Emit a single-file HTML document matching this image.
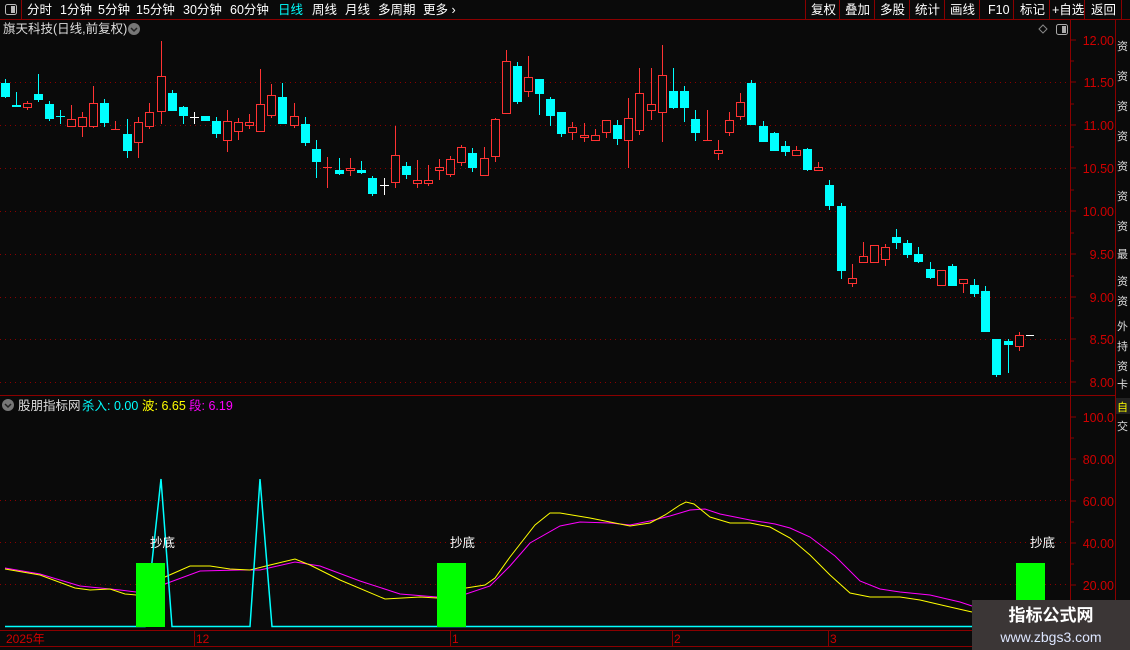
<!DOCTYPE html>
<html><head><meta charset="utf-8"><style>
body{margin:0;background:#0a0a0a;width:1130px;height:650px;overflow:hidden;font-family:"Liberation Sans","Noto Sans CJK SC",sans-serif;}
svg{position:absolute;left:0;top:0}
</style></head><body>
<svg width="1130" height="650" viewBox="0 0 1130 650" font-family="Liberation Sans, Noto Sans CJK SC, sans-serif">
<rect width="1130" height="650" fill="#0a0a0a"/>
<!-- top bar -->
<line x1="0" y1="19.5" x2="1130" y2="19.5" stroke="#8b0000"/>
<line x1="21.5" y1="0" x2="21.5" y2="19" stroke="#8b0000"/>
<rect x="5.5" y="4.5" width="11" height="10" rx="2" fill="none" stroke="#bbb"/><rect x="11" y="6" width="4" height="7" fill="#bbb"/>
<g font-size="12.5" fill="#fff">
<text x="27" y="14">分时</text><text x="60" y="14">1分钟</text><text x="98" y="14">5分钟</text><text x="136" y="14">15分钟</text><text x="183" y="14">30分钟</text><text x="230" y="14">60分钟</text>
<text x="278" y="14" fill="#00ffff">日线</text><text x="312" y="14">周线</text><text x="345" y="14">月线</text><text x="378" y="14">多周期</text><text x="423" y="14">更多 ›</text>
<text x="811" y="14">复权</text><text x="845" y="14">叠加</text><text x="880" y="14">多股</text><text x="915" y="14">统计</text><text x="950" y="14">画线</text><text x="988" y="14">F10</text><text x="1020" y="14">标记</text><text x="1052" y="14">+自选</text><text x="1091" y="14">返回</text>
</g>
<g stroke="#8b0000"><line x1="805.5" y1="0" x2="805.5" y2="19"/><line x1="839.5" y1="0" x2="839.5" y2="19"/><line x1="874.5" y1="0" x2="874.5" y2="19"/><line x1="909.5" y1="0" x2="909.5" y2="19"/><line x1="944.5" y1="0" x2="944.5" y2="19"/><line x1="979.5" y1="0" x2="979.5" y2="19"/><line x1="1013.5" y1="0" x2="1013.5" y2="19"/><line x1="1049.5" y1="0" x2="1049.5" y2="19"/><line x1="1084.5" y1="0" x2="1084.5" y2="19"/><line x1="1121.5" y1="0" x2="1121.5" y2="19"/></g>
<text x="3" y="33" font-size="12.5" fill="#ddd">旗天科技(日线,前复权)</text>
<circle cx="134" cy="29" r="6" fill="#777"/><path d="M131 28l3 3 3-3" stroke="#222" stroke-width="1.5" fill="none"/>
<path d="M1043 25l4 4-4 4-4-4z" fill="none" stroke="#888"/>
<rect x="1056.5" y="24.5" width="11" height="10" rx="2" fill="none" stroke="#aaa"/><rect x="1062" y="26" width="4" height="7" fill="#aaa"/>
<!-- axes -->
<line x1="1070.5" y1="19" x2="1070.5" y2="650" stroke="#8b0000"/>
<line x1="1115.5" y1="19" x2="1115.5" y2="650" stroke="#8b0000"/>
<line x1="0" y1="395.5" x2="1115" y2="395.5" stroke="#8b0000"/>
<g stroke="#8b0000" stroke-dasharray="1 4">
<line x1="0" y1="82.5" x2="1068" y2="82.5"/><line x1="0" y1="125.5" x2="1068" y2="125.5"/><line x1="0" y1="168.5" x2="1068" y2="168.5"/><line x1="0" y1="211.5" x2="1068" y2="211.5"/><line x1="0" y1="254.5" x2="1068" y2="254.5"/><line x1="0" y1="297.5" x2="1068" y2="297.5"/><line x1="0" y1="339.5" x2="1068" y2="339.5"/><line x1="0" y1="382.5" x2="1068" y2="382.5"/>
<line x1="0" y1="500.5" x2="1068" y2="500.5"/><line x1="0" y1="542.5" x2="1068" y2="542.5"/><line x1="0" y1="584.5" x2="1068" y2="584.5"/>
</g>
<g fill="#d00000" font-size="12.5" text-anchor="end">
<text x="1114" y="45">12.00</text><text x="1114" y="87">11.50</text><text x="1114" y="130">11.00</text><text x="1114" y="173">10.50</text><text x="1114" y="216">10.00</text><text x="1114" y="259">9.50</text><text x="1114" y="302">9.00</text><text x="1114" y="344">8.50</text><text x="1114" y="387">8.00</text>
<text x="1114" y="422">100.0</text><text x="1114" y="464">80.00</text><text x="1114" y="506">60.00</text><text x="1114" y="548">40.00</text><text x="1114" y="590">20.00</text>
</g>
<g stroke="#8b0000"><path d="M1071 40h5M1071 61h3M1071 82h5M1071 104h3M1071 125h5M1071 147h3M1071 168h5M1071 190h3M1071 211h5M1071 233h3M1071 254h5M1071 276h3M1071 297h5M1071 318h3M1071 339h5M1071 361h3M1071 382h5M1071 417h5M1071 438h3M1071 459h5M1071 480h3M1071 501h5M1071 522h3M1071 543h5M1071 564h3M1071 585h5M1071 606h3"/></g>
<g fill="#ddd" font-size="11"><text x="1117" y="50">资</text><text x="1117" y="80">资</text><text x="1117" y="110">资</text><text x="1117" y="140">资</text><text x="1117" y="170">资</text><text x="1117" y="200">资</text><text x="1117" y="230">资</text><text x="1117" y="258">最</text><text x="1117" y="285">资</text><text x="1117" y="305">资</text><text x="1117" y="330">外</text><text x="1117" y="350">持</text><text x="1117" y="370">资</text><text x="1117" y="388">卡</text><text x="1117" y="430">交</text></g>
<rect x="1116" y="398" width="14" height="16" fill="#222"/><text x="1117" y="411" font-size="11" fill="#ff0">自</text>
<!-- candles cyan -->
<path stroke="#00ffff" stroke-width="1" fill="none" d="M5.5 79V98M16.5 92V107M38.5 74V102M49.5 101V121M60.5 110V124M56 116.5h9M104.5 99V127M127.5 119V158M172.5 90V111M183.5 106V124M205.5 116V121M216.5 117V138M282.5 83V124M305.5 117V146M316.5 140V178M339.5 158V175M361.5 161V174M372.5 176V196M406.5 162V179M472.5 148V172M517.5 62V104M539.5 79V115M550.5 97V126M561.5 112V137M617.5 120V145M673.5 68V109M684.5 86V122M695.5 110V141M751.5 80V125M763.5 121V142M774.5 132V151M785.5 141V156M807.5 148V171M829.5 180V210M841.5 203V279M896.5 229V249M907.5 240V258M918.5 247V263M930.5 262V279M952.5 264V286M974.5 279V297M985.5 286V332M996.5 339V377M1008.5 339V373"/>
<path fill="#00ffff" d="M1 83h9v14h-9zM12 105h9v2h-9zM34 94h9v6h-9zM45 104h9v15h-9zM100 103h9v20h-9zM123 134h9v17h-9zM168 93h9v18h-9zM179 107h9v9h-9zM201 116h9v5h-9zM212 121h9v13h-9zM278 97h9v27h-9zM301 124h9v19h-9zM312 149h9v13h-9zM335 170h9v4h-9zM357 170h9v3h-9zM368 178h9v16h-9zM402 166h9v9h-9zM468 153h9v15h-9zM513 66h9v36h-9zM535 79h9v15h-9zM546 99h9v17h-9zM557 112h9v22h-9zM613 125h9v14h-9zM669 91h9v17h-9zM680 91h9v17h-9zM691 119h9v14h-9zM747 83h9v42h-9zM759 126h9v16h-9zM770 133h9v18h-9zM781 146h9v6h-9zM803 149h9v21h-9zM825 185h9v21h-9zM837 206h9v65h-9zM892 237h9v6h-9zM903 243h9v12h-9zM914 254h9v8h-9zM926 269h9v9h-9zM948 266h9v20h-9zM970 285h9v9h-9zM981 291h9v41h-9zM992 339h9v36h-9zM1004 341h9v4h-9z"/>
<!-- red -->
<path stroke="#ff3333" fill="none" d="M27.5 101V110M71.5 105V126M82.5 112V137M93.5 86V128M115.5 121V129M111 129.5h9M138.5 117V158M149.5 103V129M161.5 41V124M227.5 110V152M238.5 118V140M249.5 114V129M260.5 69V131M271.5 84V118M294.5 103V128M327.5 157V188M323 167.5h9M350.5 158V176M395.5 126V188M417.5 160V188M428.5 165V186M439.5 159V180M450.5 156V177M461.5 145V166M484.5 147V176M495.5 118V162M506.5 50V113M528.5 56V97M572.5 122V140M584.5 123V142M595.5 129V140M606.5 120V138M628.5 98V168M639.5 68V135M651.5 68V120M662.5 45V142M707.5 110V141M703 140.5h9M718.5 140V160M729.5 112V136M740.5 93V120M796.5 146V155M818.5 162V170M852.5 264V287M863.5 242V262M874.5 245V262M885.5 244V266M941.5 270V285M963.5 279V293M1019.5 332V351"/>
<g stroke="#ff3333" fill="#0a0a0a">
<rect x="23.5" y="103.5" width="8" height="4"/><rect x="67.5" y="119.5" width="8" height="7"/><rect x="78.5" y="117.5" width="8" height="9"/><rect x="89.5" y="103.5" width="8" height="23"/><rect x="134.5" y="122.5" width="8" height="20"/><rect x="145.5" y="112.5" width="8" height="14"/><rect x="157.5" y="76.5" width="8" height="35"/><rect x="223.5" y="121.5" width="8" height="19"/><rect x="234.5" y="122.5" width="8" height="9"/><rect x="245.5" y="122.5" width="8" height="3"/><rect x="256.5" y="104.5" width="8" height="27"/><rect x="267.5" y="95.5" width="8" height="20"/><rect x="290.5" y="116.5" width="8" height="9"/><rect x="346.5" y="168.5" width="8" height="2"/><rect x="391.5" y="155.5" width="8" height="27"/><rect x="413.5" y="180.5" width="8" height="3"/><rect x="424.5" y="180.5" width="8" height="3"/><rect x="435.5" y="167.5" width="8" height="3"/><rect x="446.5" y="159.5" width="8" height="15"/><rect x="457.5" y="147.5" width="8" height="15"/><rect x="480.5" y="158.5" width="8" height="17"/><rect x="491.5" y="119.5" width="8" height="37"/><rect x="502.5" y="61.5" width="8" height="52"/><rect x="524.5" y="77.5" width="8" height="14"/><rect x="568.5" y="127.5" width="8" height="5"/><rect x="580.5" y="135.5" width="8" height="2"/><rect x="591.5" y="135.5" width="8" height="5"/><rect x="602.5" y="120.5" width="8" height="12"/><rect x="624.5" y="118.5" width="8" height="22"/><rect x="635.5" y="93.5" width="8" height="37"/><rect x="647.5" y="104.5" width="8" height="6"/><rect x="658.5" y="75.5" width="8" height="37"/><rect x="714.5" y="150.5" width="8" height="3"/><rect x="725.5" y="120.5" width="8" height="12"/><rect x="736.5" y="102.5" width="8" height="14"/><rect x="792.5" y="150.5" width="8" height="5"/><rect x="814.5" y="167.5" width="8" height="3"/><rect x="848.5" y="278.5" width="8" height="5"/><rect x="859.5" y="256.5" width="8" height="6"/><rect x="870.5" y="245.5" width="8" height="17"/><rect x="881.5" y="247.5" width="8" height="12"/><rect x="937.5" y="270.5" width="8" height="15"/><rect x="959.5" y="279.5" width="8" height="4"/><rect x="1015.5" y="335.5" width="8" height="11"/>
</g>
<path stroke="#fff" fill="none" d="M194.5 112V124M190 117.5h9M384.5 178V195M380 185.5h9M1026 335.5h8"/>
<!-- indicator header -->
<circle cx="8" cy="405" r="6" fill="#777"/><path d="M5 404l3 3 3-3" stroke="#222" stroke-width="1.5" fill="none"/>
<text x="18" y="410" font-size="12.5" fill="#ddd">股朋指标网</text>
<text x="82" y="410" font-size="12.5" fill="#00ffff">杀入: 0.00</text>
<text x="142" y="410" font-size="12.5" fill="#ffff00">波: 6.65</text>
<text x="189" y="410" font-size="12.5" fill="#ff00ff">段: 6.19</text>
<!-- indicator -->
<path fill="none" stroke="#ff00ff" d="M5 568L40 574L80 586L120 590L136 592L165 584L200 571L240 570L260 570L295 562L320 566L360 581L400 594L437 597L466 594L490 586L510 566L530 543L560 526L580 522L610 523L630 525L650 521L670 516L690 510L705 509L720 514L750 520L775 524L790 528L810 537L835 556L860 581L880 589L900 592L930 595L960 602L972 606"/>
<path fill="none" stroke="#ffff00" d="M5 569L40 575L75 588L90 590L110 589L125 594L136 595L165 577L190 566L210 566L230 569L250 570L270 565L295 559L310 565L340 580L385 599L420 597L437 598L466 588L485 585L495 578L510 557L535 525L550 513L560 513L590 518L610 522L630 526L650 523L665 515L680 505L686 502L694 504L710 517L730 523L750 523L770 527L790 538L810 555L830 575L850 593L870 597L900 597L920 600L950 607L972 612"/>
<path fill="none" stroke="#00ffff" stroke-width="1.5" d="M5 626.5H145L161 479L172 626.5H250L260 479L272 626.5H972"/>
<g fill="#00ff00"><rect x="136" y="563" width="29" height="64"/><rect x="437" y="563" width="29" height="64"/><rect x="1016" y="563" width="29" height="64"/></g>
<g fill="#fff" font-size="12.5"><text x="150" y="547">抄底</text><text x="450" y="547">抄底</text><text x="1030" y="547">抄底</text></g>
<!-- bottom axis -->
<line x1="0" y1="630.5" x2="1115" y2="630.5" stroke="#8b0000"/>
<line x1="0" y1="646.5" x2="1115" y2="646.5" stroke="#8b0000"/>
<path stroke="#8b0000" d="M194.5 631v15M450.5 631v15M672.5 631v15M828.5 631v15"/>
<g fill="#d00000" font-size="12"><text x="6" y="643">2025年</text><text x="196" y="643">12</text><text x="452" y="643">1</text><text x="674" y="643">2</text><text x="830" y="643">3</text></g>
<!-- watermark -->
<rect x="972" y="600" width="158" height="50" fill="#3b3636"/>
<text x="1051" y="621" font-size="17" font-weight="bold" fill="#fff" text-anchor="middle">指标公式网</text>
<text x="1051" y="642" font-size="14" fill="#dde6ff" text-anchor="middle">www.zbgs3.com</text>
</svg>
</body></html>
